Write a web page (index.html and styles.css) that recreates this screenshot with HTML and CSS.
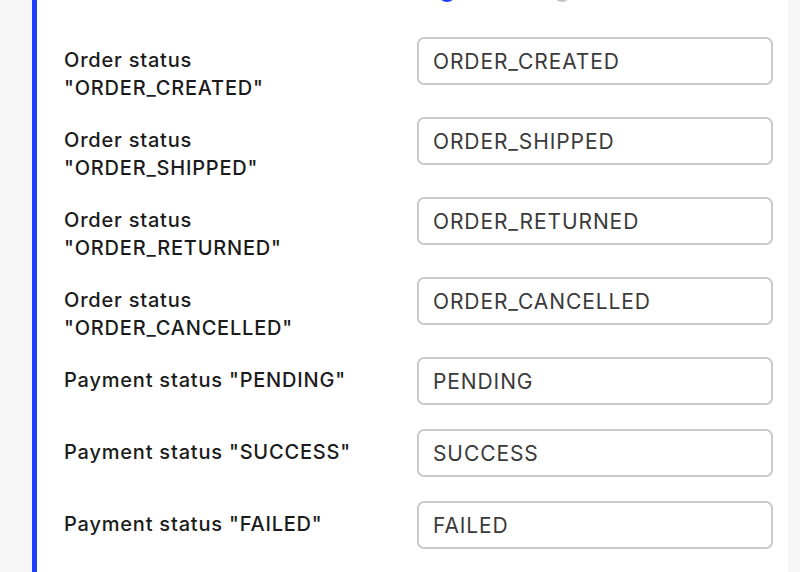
FILE: index.html
```html
<!DOCTYPE html>
<html lang="en">
<head>
<meta charset="utf-8">
<title>Status mapping</title>
<link rel="stylesheet" href="styles.css">
</head>
<body>
<div class="page">
  <section class="card">
    <div class="radios">
      <span class="radio radio-on"></span>
      <span class="radio radio-off"></span>
    </div>
    <div class="form">
      <label class="label">Order status<br>"ORDER_CREATED"</label>
      <div class="field"><input class="input" type="text" value="ORDER_CREATED"></div>

      <label class="label">Order status<br>"ORDER_SHIPPED"</label>
      <div class="field"><input class="input" type="text" value="ORDER_SHIPPED"></div>

      <label class="label">Order status<br>"ORDER_RETURNED"</label>
      <div class="field"><input class="input" type="text" value="ORDER_RETURNED"></div>

      <label class="label">Order status<br>"ORDER_CANCELLED"</label>
      <div class="field"><input class="input" type="text" value="ORDER_CANCELLED"></div>

      <label class="label">Payment status "PENDING"</label>
      <div class="field"><input class="input" type="text" value="PENDING"></div>

      <label class="label">Payment status "SUCCESS"</label>
      <div class="field"><input class="input" type="text" value="SUCCESS"></div>

      <label class="label">Payment status "FAILED"</label>
      <div class="field"><input class="input" type="text" value="FAILED"></div>
    </div>
  </section>
</div>
</body>
</html>
```

FILE: styles.css
```css
html, body {
  margin: 0;
  padding: 0;
  height: 100%;
  overflow: hidden;
}
body {
  background: #f6f6f6;
  font-family: Inter, "Noto Sans", sans-serif;
}
.page {
  padding-left: 32px;
  padding-right: 12px;
  height: 100%;
}
.card {
  position: relative;
  background: #ffffff;
  border-left: 5px solid #1c3dff;
  min-height: 100%;
  padding: 37px 15px 0 27px;
  box-sizing: border-box;
}
.radios {
  position: absolute;
  top: -16px;
  left: 401px;
  display: flex;
  gap: 97px;
}
.radio {
  width: 18px;
  height: 18px;
  border-radius: 50%;
  box-sizing: border-box;
}
.radio-on {
  border: 5px solid #1c3dff;
}
.radio-off {
  border: 2px solid #c4c4c4;
}
.form {
  display: grid;
  grid-template-columns: 1fr 356px;
  column-gap: 16px;
  row-gap: 16px;
  align-items: start;
}
.label {
  padding-top: 9px;
  margin-bottom: -1px;
  font-size: 20px;
  line-height: 28px;
  font-weight: 500;
  letter-spacing: 0.8px;
  color: #1b1b1b;
}
.field {
  padding-bottom: 8px;
}
.input {
  display: block;
  width: 100%;
  height: 48px;
  box-sizing: border-box;
  border: 2px solid #cacaca;
  border-radius: 7px;
  padding: 0 14px;
  font-family: Inter, "Noto Sans", sans-serif;
  font-size: 21px;
  letter-spacing: 0.9px;
  color: #3a3a3a;
  background: #fff;
  outline: none;
}
```
